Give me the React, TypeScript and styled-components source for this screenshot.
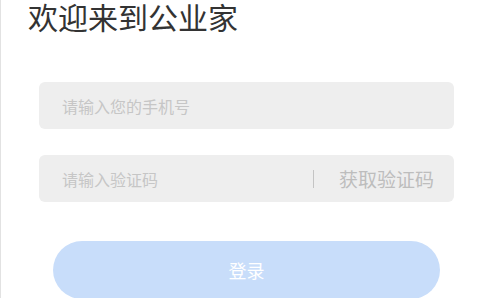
import styled, { createGlobalStyle } from "styled-components"

const GlobalStyle = createGlobalStyle`
  html, body {
    margin: 0;
    padding: 0;
    background: #ffffff;
    font-family: "Noto Sans CJK SC", "Noto Sans", sans-serif;
  }
`

const App = () => {
  return (
    <Page>
      <GlobalStyle />
      <Title>欢迎来到公业家</Title>
      <Form>
        <Field>
          <Input placeholder="请输入您的手机号" />
        </Field>
        <Field>
          <Input placeholder="请输入验证码" />
          <Divider />
          <CodeButton>获取验证码</CodeButton>
        </Field>
      </Form>
      <LoginButton>登录</LoginButton>
    </Page>
  )
}

export default App

const Page = styled.div`
  height: 298px;
  overflow: hidden;
  border-left: 1px solid #e2e2e2;
  box-sizing: border-box;
`

const Title = styled.h1`
  margin: 0;
  padding: 0 0 0 27px;
  font-size: 30px;
  line-height: 32px;
  font-weight: 400;
  color: #333333;
`

const Form = styled.div`
  display: flex;
  flex-direction: column;
  gap: 26px;
  padding: 50px 38px 0 38px;
`

const Field = styled.div`
  display: flex;
  align-items: center;
  height: 47px;
  border-radius: 6px;
  background: #eeeeee;
  padding: 0 20px 0 23px;
`

const Input = styled.input`
  flex: 1;
  min-width: 0;
  border: none;
  outline: none;
  background: transparent;
  font-family: inherit;
  font-size: 16px;
  color: #333333;
  padding: 0;

  &::placeholder {
    color: #c6c6c6;
  }
`

const Divider = styled.div`
  width: 1px;
  height: 18px;
  background: #c4c4c4;
  margin-right: 25px;
`

const CodeButton = styled.button`
  border: none;
  background: transparent;
  padding: 0;
  font-family: inherit;
  font-size: 19px;
  color: #bdbdbd;
`

const LoginButton = styled.button`
  display: block;
  width: 387px;
  height: 58px;
  margin: 39px 0 0 52px;
  border: none;
  border-radius: 29px;
  background: #c8ddfa;
  color: #ffffff;
  font-family: inherit;
  font-size: 18px;
`
